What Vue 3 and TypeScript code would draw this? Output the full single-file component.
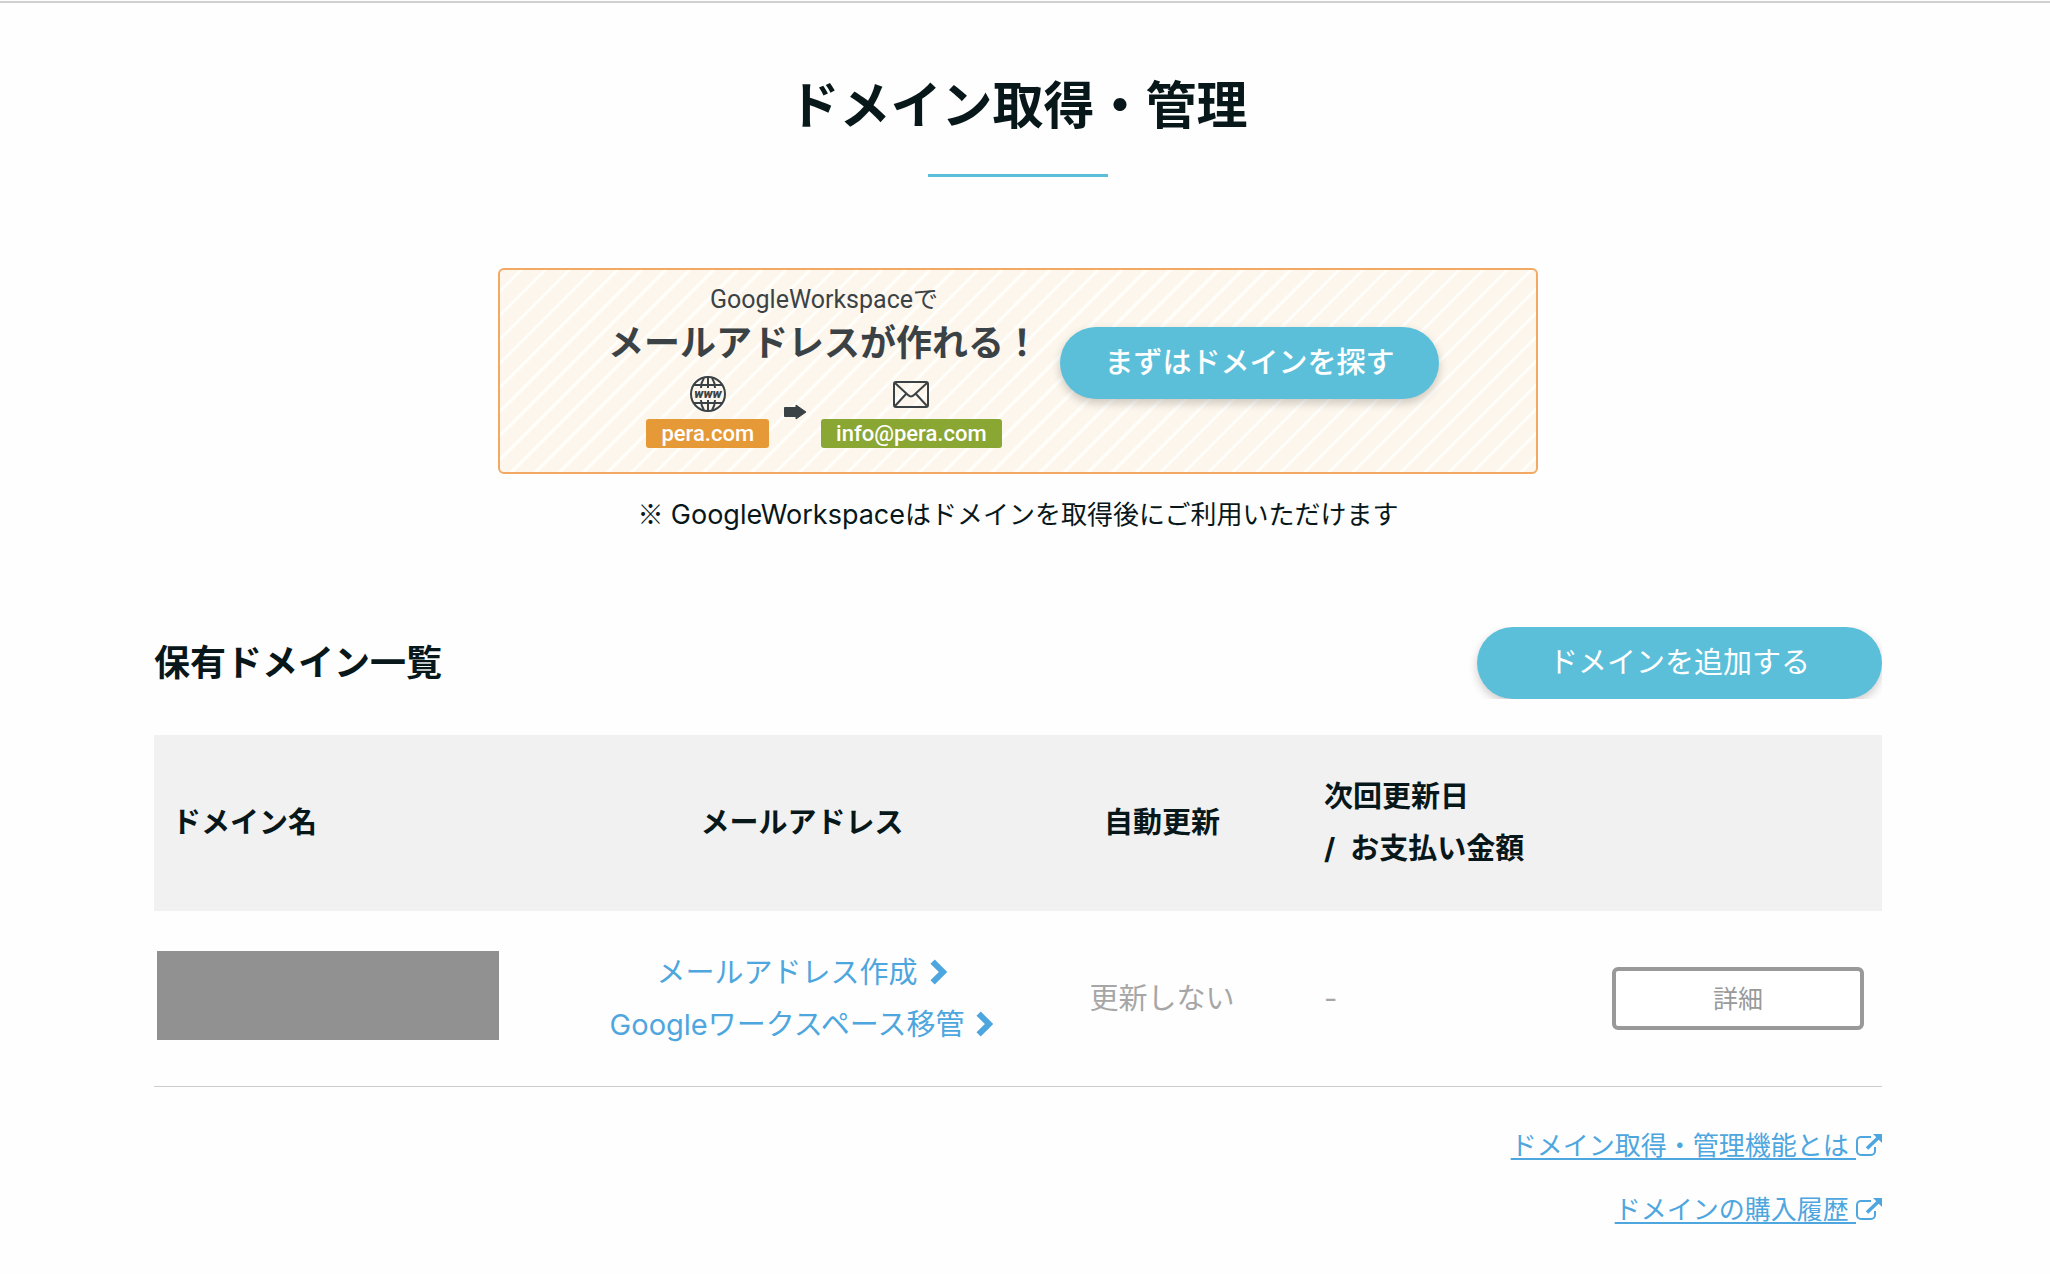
<script setup lang="ts">
interface MailLink {
  label: string
}

const mailLinks: MailLink[] = [
  { label: 'メールアドレス作成' },
  { label: 'Googleワークスペース移管' },
]

const helpLinks: string[] = ['ドメイン取得・管理機能とは', 'ドメインの購入履歴']
</script>

<template>
  <div class="page">
    <main class="content">
      <h1 class="title">ドメイン取得・管理</h1>

      <section class="banner">
        <div class="promo">
          <p class="promo-lead">GoogleWorkspaceで</p>
          <p class="promo-main">メールアドレスが作れる！</p>
          <div class="promo-flow">
            <div class="promo-item">
              <svg class="promo-icon" viewBox="0 0 38 38" width="38" height="38" fill="none" stroke="#3b4246" stroke-width="2" aria-hidden="true">
                <circle cx="19" cy="19" r="17" />
                <path d="M4.500 10h29M4.500 28h29M15 3c-2 3-3 6-3 10M23 3c2 3 3 6 3 10M12 25c0 4 1 7 3 10M26 25c0 4-1 7-3 10M19 2v11M19 25v11" />
                <text x="19" y="23" text-anchor="middle" class="globe-text">www</text>
              </svg>
              <span class="tag tag-orange">pera.com</span>
            </div>
            <svg class="promo-arrow" viewBox="0 0 24 16" width="24" height="16" aria-hidden="true">
              <path d="M1.500 3.500H13V1L23 8l-10 7v-2.500H1.500z" fill="#3b4246" stroke="#3b4246" stroke-linejoin="round" />
            </svg>
            <div class="promo-item">
              <svg class="promo-icon" viewBox="0 0 38 38" width="38" height="38" fill="none" stroke="#3b4246" stroke-width="2" aria-hidden="true">
                <rect x="2" y="7" width="34" height="25" rx="2" />
                <path d="M3 8l13 12q3 3 6 0L35 8M3 31l11-12M35 31L24 19" />
              </svg>
              <span class="tag tag-green">info@pera.com</span>
            </div>
          </div>
        </div>
        <button type="button" class="pill pill-search">まずはドメインを探す</button>
      </section>
      <p class="note"><span class="mark">※</span> <span class="latin">GoogleWorkspace</span>はドメインを取得後にご利用いただけます</p>

      <header class="list-head">
        <h2 class="list-title">保有ドメイン一覧</h2>
        <button type="button" class="pill pill-add">ドメインを追加する</button>
      </header>

      <table class="domains">
        <thead>
          <tr>
            <th scope="col" class="wide">ドメイン名</th>
            <th scope="col" class="wide center">メールアドレス</th>
            <th scope="col" class="center">自動更新</th>
            <th scope="col">次回更新日<br /><span class="slash">/</span> お支払い金額</th>
            <th scope="col"></th>
          </tr>
        </thead>
        <tbody>
          <tr>
            <td class="name-cell"><div class="name-mask"></div></td>
            <td class="center">
              <a v-for="link in mailLinks" :key="link.label" href="#" class="mail-link">
                {{ link.label }}
                <svg viewBox="0 0 18 28" width="18" height="28" aria-hidden="true">
                  <path d="M2.600 2.600L13 13 2.600 23.400" fill="none" stroke="currentColor" stroke-width="6" />
                </svg>
              </a>
            </td>
            <td class="center muted">更新しない</td>
            <td class="muted">-</td>
            <td class="action"><button type="button" class="detail">詳細</button></td>
          </tr>
        </tbody>
      </table>

      <nav class="help">
        <a v-for="label in helpLinks" :key="label" href="#" class="help-link">
          <span class="help-text">{{ label }}&nbsp;</span>
          <svg viewBox="0 0 26 24" width="26" height="24" fill="none" stroke="currentColor" aria-hidden="true">
            <path d="M15 3H5a4 4 0 0 0-4 4v10a4 4 0 0 0 4 4h10a4 4 0 0 0 4-4v-4" stroke-width="2" />
            <path d="M11 14.500L22 4" stroke-width="3.500" />
            <path d="M17 0h9v9z" fill="currentColor" stroke="none" />
          </svg>
        </a>
      </nav>
    </main>
  </div>
</template>

<style>
body {
  margin: 0;
  background: #fefefe;
}
</style>

<style scoped>
.page {
  padding-top: 1px;
  color: #08171a;
  font-family: Inter, "Noto Sans CJK JP", sans-serif;
  font-size: 29px;
  line-height: 52px;
}

.content {
  border-top: 2px solid #d0d0d0;
  padding: 65px 168px 0 154px;
}

.title {
  margin: 0;
  font-size: 51px;
  line-height: 76px;
  font-weight: 700;
  text-align: center;
}

.title::after {
  content: "";
  display: block;
  width: 180px;
  height: 3px;
  margin: 30px auto 0;
  background: #5bbfda;
}

.banner {
  box-sizing: border-box;
  display: flex;
  align-items: flex-start;
  gap: 20px;
  max-width: 1040px;
  height: 206px;
  margin: 91px auto 0;
  padding-left: 108px;
  border: 2px solid #f3a964;
  border-radius: 6px;
  background: repeating-linear-gradient(135deg, #fdf6ec 0 13px, #fffefb 14px 16px, #fdf6ec 17px);
}

.promo {
  display: flex;
  flex-direction: column;
  align-items: center;
  width: 432px;
  color: #3b4246;
}

.promo-lead {
  margin: 14px 0 0;
  font-family: Roboto, "Noto Sans CJK JP", sans-serif;
  font-size: 25px;
  line-height: 32px;
}

.promo-main {
  margin: 5px 0 0;
  font-size: 36px;
  line-height: 44px;
  font-weight: 700;
  white-space: nowrap;
}

.promo-flow {
  display: flex;
  align-items: flex-end;
  gap: 14px;
  margin-top: 10px;
}

.promo-item {
  display: flex;
  flex-direction: column;
  align-items: center;
  gap: 6px;
}

.promo-icon,
.promo-arrow {
  display: block;
}

.promo-arrow {
  margin-bottom: 28px;
}

.globe-text {
  fill: #3b4246;
  stroke: none;
  font-family: Roboto, sans-serif;
  font-size: 13px;
  font-style: italic;
  font-weight: 900;
}

.tag {
  padding: 0 15px;
  border-radius: 3px;
  color: #fff;
  font-family: Roboto, sans-serif;
  font-size: 22px;
  line-height: 29px;
  font-weight: 500;
}

.tag-orange {
  background: #e59a37;
}

.tag-green {
  background: #8aa633;
}

.pill {
  height: 72px;
  padding: 0;
  border: 0;
  border-radius: 36px;
  background: #5bbfda;
  box-shadow: 0 4px 10px rgba(0, 0, 0, 0.2);
  color: #fff;
  font-family: inherit;
  font-size: 29px;
  line-height: 40px;
}

.pill-search {
  width: 379px;
  margin-top: 57px;
  font-weight: 500;
}

.pill-add {
  width: 405px;
}

.note {
  margin: 13px 0 0;
  font-size: 26px;
  text-align: center;
}

.mark {
  font-family: "Noto Sans CJK JP", sans-serif;
}

.latin {
  font-size: 27px;
}

.list-head {
  display: flex;
  align-items: center;
  justify-content: space-between;
  margin-top: 86px;
  overflow: hidden;
}

.list-title {
  margin: 0;
  font-size: 36px;
  line-height: 56px;
  font-weight: 700;
}

.domains {
  width: 100%;
  margin-top: 36px;
  border-collapse: collapse;
  table-layout: fixed;
}

.domains th {
  padding: 36px 18px;
  background: #f1f1f1;
  font-weight: 700;
  text-align: left;
}

.domains th.wide {
  width: 25%;
  box-sizing: border-box;
}

.domains td {
  padding: 35px 18px;
  border-bottom: 1px solid #ccc;
}

.domains .center {
  text-align: center;
}

.slash {
  margin-right: 8px;
}

.domains .name-cell {
  padding: 40px 3px 46px;
}

.name-mask {
  width: 342px;
  height: 89px;
  background: #919191;
}

.domains .muted {
  color: #a6a6a6;
}

.mail-link {
  display: flex;
  align-items: center;
  justify-content: center;
  gap: 12px;
  color: #4ea6df;
  text-decoration: none;
  white-space: nowrap;
}

.domains .action {
  text-align: right;
}

.detail {
  width: 252px;
  height: 63px;
  padding: 0;
  border: 4px solid #999;
  border-radius: 6px;
  background: #fff;
  color: #999;
  font-family: inherit;
  font-size: 25px;
  line-height: 36px;
  vertical-align: middle;
}

.help {
  display: flex;
  flex-direction: column;
  align-items: flex-end;
  gap: 12px;
  margin-top: 33px;
}

.help-link {
  display: flex;
  align-items: center;
  color: #4ea6df;
  font-size: 26px;
  text-decoration: none;
}

.help-text {
  text-decoration: underline;
  text-decoration-thickness: 2px;
  text-underline-offset: 3px;
}
</style>
